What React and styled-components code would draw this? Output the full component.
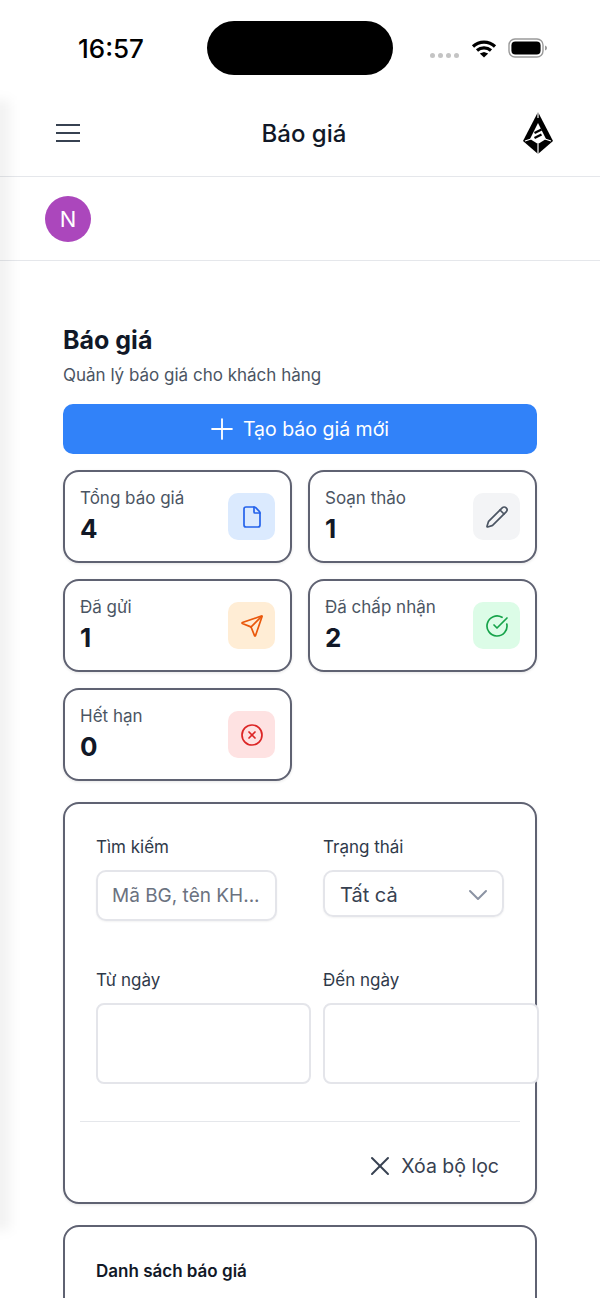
import React from 'react';
import styled, { createGlobalStyle } from 'styled-components';
import { Plus, File, Pencil, Send, CircleCheckBig, CircleX, ChevronDown, X } from 'lucide-react';

const GlobalStyle = createGlobalStyle`
  html, body {
    margin: 0;
    padding: 0;
    background: #fff;
    height: 100%;
    overflow: hidden;
  }
  * {
    box-sizing: border-box;
  }
  body {
    font-family: Inter, "Noto Sans", "Liberation Sans", sans-serif;
    color: #111827;
  }
`;

const stats = [
  { label: 'Tổng báo giá', value: 4, Icon: File, bg: '#dbeafe', fg: '#2563eb' },
  { label: 'Soạn thảo', value: 1, Icon: Pencil, bg: '#f3f4f6', fg: '#4b5563' },
  { label: 'Đã gửi', value: 1, Icon: Send, bg: '#ffedd5', fg: '#ea580c' },
  { label: 'Đã chấp nhận', value: 2, Icon: CircleCheckBig, bg: '#dcfce7', fg: '#16a34a' },
  { label: 'Hết hạn', value: 0, Icon: CircleX, bg: '#fee2e2', fg: '#dc2626' },
];

const Hamburger = () => (
  <svg width="24" height="20" viewBox="0 0 24 20">
    <path d="M0 2h24M0 10h24M0 18h24" stroke="#374151" strokeWidth="2" fill="none" />
  </svg>
);

const Logo = () => (
  <svg width="30" height="42" viewBox="0 0 30 42">
    <polygon points="15,0 30,29 15,42 0,29" fill="#000" />
    <polygon points="15,11 23,27 15,32 7,27" fill="#fff" />
    <path d="M11.500 21l7-3.500M11.500 26l7-3.500" stroke="#000" strokeWidth="2.300" fill="none" />
    <path d="M2 29l6-2M28 29l-6-2M15 32v10M15 0v6" stroke="#fff" strokeWidth="1.200" fill="none" />
  </svg>
);

const Wifi = () => (
  <svg width="26" height="19" viewBox="0 0 26 19">
    <path d="M2 7.500a16 16 0 0 1 22 0M6 11.500a10.500 10.500 0 0 1 14 0" stroke="#000" strokeWidth="3.200" fill="none" />
    <polygon points="13,18.500 8.800,14.400 13,13 17.200,14.400" fill="#000" />
  </svg>
);

const Battery = () => (
  <svg width="40" height="20" viewBox="0 0 40 20">
    <rect x="1" y="1" width="34" height="18" rx="6" fill="none" stroke="#9a9a9a" strokeWidth="1.400" />
    <rect x="3.400" y="3.400" width="29.200" height="13.200" rx="4" fill="#000" />
    <path d="M37 7.500c1.400.4 2 1.300 2 2.500s-.6 2.100-2 2.500z" fill="#9a9a9a" />
  </svg>
);

const App = () => (
  <Page>
    <GlobalStyle />
    <DrawerShadow />
    <StatusBar>
      <Clock>16:57</Clock>
      <Island />
      <StatusIcons>
        <Dots>
          <i /><i /><i /><i />
        </Dots>
        <Wifi />
        <Battery />
      </StatusIcons>
    </StatusBar>

    <NavBar>
      <Hamburger />
      <NavTitle>Báo giá</NavTitle>
      <Logo />
    </NavBar>

    <UserRow>
      <Avatar>N</Avatar>
    </UserRow>

    <Content>
      <Title>Báo giá</Title>
      <Subtitle>Quản lý báo giá cho khách hàng</Subtitle>
      <PrimaryButton>
        <Plus size={34} strokeWidth={1.300} />
        Tạo báo giá mới
      </PrimaryButton>

      <StatGrid>
        {stats.map(({ label, value, Icon, bg, fg }) => (
          <StatCard key={label}>
            <StatText>
              <StatLabel>{label}</StatLabel>
              <StatValue>{value}</StatValue>
            </StatText>
            <IconTile $bg={bg} $fg={fg}>
              <Icon size={24} strokeWidth={1.700} />
            </IconTile>
          </StatCard>
        ))}
      </StatGrid>

      <FilterPanel>
        <FilterGrid>
          <Field>
            <FieldLabel>Tìm kiếm</FieldLabel>
            <SearchInput placeholder="Mã BG, tên KH..." readOnly />
          </Field>
          <Field>
            <FieldLabel>Trạng thái</FieldLabel>
            <SelectBox>
              Tất cả
              <ChevronDown size={32} strokeWidth={1.500} color="#8b93a3" />
            </SelectBox>
          </Field>
          <Field>
            <FieldLabel>Từ ngày</FieldLabel>
            <DateBox />
          </Field>
          <Field>
            <FieldLabel>Đến ngày</FieldLabel>
            <DateBox />
          </Field>
        </FilterGrid>
        <Divider />
        <ClearRow>
          <X size={32} strokeWidth={1.500} />
          Xóa bộ lọc
        </ClearRow>
      </FilterPanel>

      <ListPanel>
        <ListTitle>Danh sách báo giá</ListTitle>
      </ListPanel>
    </Content>
  </Page>
);

export default App;

const Page = styled.div`
  position: relative;
  width: 600px;
  height: 1298px;
  overflow: hidden;
  background: #fff;
`;

const DrawerShadow = styled.div`
  position: absolute;
  left: -10px;
  top: 100px;
  width: 20px;
  height: 1130px;
  background: rgba(0, 0, 0, 0.05);
  filter: blur(6px);
  pointer-events: none;
`;

const StatusBar = styled.div`
  display: flex;
  align-items: flex-start;
  height: 95px;
  padding: 21px 0 0 78px;
`;

const Clock = styled.div`
  width: 129px;
  margin-top: 12px;
  font-size: 26px;
  line-height: 32px;
  font-weight: 500;
  color: #000;
`;

const Island = styled.div`
  width: 186px;
  height: 54px;
  border-radius: 27px;
  background: #000;
`;

const StatusIcons = styled.div`
  display: flex;
  align-items: center;
  gap: 11px;
  margin: 17px 0 0 37px;
`;

const Dots = styled.div`
  display: flex;
  gap: 3px;
  width: 30px;
  margin-top: 14px;

  i {
    width: 5px;
    height: 5px;
    border-radius: 50%;
    background: #c4c4c4;
  }
`;

const NavBar = styled.header`
  display: flex;
  align-items: center;
  justify-content: space-between;
  height: 82px;
  padding: 0 47px 5px 56px;
  border-bottom: 1px solid #e5e7eb;
`;

const NavTitle = styled.div`
  margin-left: 5px;
  font-size: 24px;
  font-weight: 500;
  color: #111827;
`;

const UserRow = styled.div`
  display: flex;
  align-items: center;
  height: 84px;
  padding: 1px 0 0 45px;
  border-bottom: 1px solid #e5e7eb;
`;

const Avatar = styled.div`
  display: flex;
  align-items: center;
  justify-content: center;
  width: 46px;
  height: 46px;
  border-radius: 50%;
  background: #ab47bc;
  color: #fff;
  font-size: 22px;
`;

const Content = styled.main`
  padding: 64px 63px 0;
`;

const Title = styled.h1`
  margin: 0;
  font-size: 25px;
  line-height: 30px;
  font-weight: 700;
  color: #111827;
`;

const Subtitle = styled.p`
  margin: 7px 0 0;
  font-size: 17px;
  line-height: 26px;
  color: #4b5563;
`;

const PrimaryButton = styled.button`
  display: flex;
  align-items: center;
  justify-content: center;
  gap: 4px;
  width: 100%;
  height: 50px;
  margin-top: 16px;
  padding: 0 6px 0 0;
  border: none;
  border-radius: 10px;
  background: #3182f9;
  color: #fff;
  font-family: inherit;
  font-size: 19.500px;
`;

const StatGrid = styled.div`
  display: grid;
  grid-template-columns: 1fr 1fr;
  gap: 16px;
  margin-top: 16px;
`;

const StatCard = styled.div`
  display: flex;
  align-items: center;
  justify-content: space-between;
  height: 93px;
  padding: 0 15px;
  border: 2px solid #5f6272;
  border-radius: 16px;
  background: #fff;
  box-shadow: 0 1px 3px rgba(0, 0, 0, 0.1);
`;

const StatText = styled.div`
  padding-bottom: 3px;
`;

const StatLabel = styled.div`
  font-size: 17px;
  line-height: 24px;
  color: #4b5563;
`;

const StatValue = styled.div`
  margin-top: 3px;
  font-size: 26px;
  line-height: 32px;
  font-weight: 700;
  color: #111827;
`;

const IconTile = styled.div`
  display: flex;
  align-items: center;
  justify-content: center;
  width: 47px;
  height: 47px;
  border-radius: 10px;
  background: ${(p) => p.$bg};
  color: ${(p) => p.$fg};
`;

const FilterPanel = styled.section`
  height: 402px;
  margin-top: 21px;
  padding: 31px 15px 0;
  border: 2px solid #5f6272;
  border-radius: 16px;
  background: #fff;
  box-shadow: 0 1px 3px rgba(0, 0, 0, 0.1);
`;

const FilterGrid = styled.div`
  display: grid;
  grid-template-columns: 215px 216px;
  grid-template-rows: 133px 153px;
  column-gap: 12px;
  padding-left: 16px;
`;

const Field = styled.div`
  display: flex;
  flex-direction: column;
  align-items: flex-start;
`;

const FieldLabel = styled.label`
  margin-bottom: 11px;
  font-size: 17px;
  line-height: 24px;
  font-weight: 400;
  color: #2f3a4a;
`;

const SearchInput = styled.input`
  width: 181px;
  height: 51px;
  padding: 0 14px;
  border: 2px solid #e4e5ea;
  border-radius: 10px;
  outline: none;
  font-family: inherit;
  font-size: 19px;
  box-shadow: 0 1px 2px rgba(0, 0, 0, 0.05);

  &::placeholder {
    color: #6b7280;
    opacity: 1;
  }
`;

const SelectBox = styled.div`
  display: flex;
  align-items: center;
  justify-content: space-between;
  width: 181px;
  height: 47px;
  padding: 2px 8px 0 15px;
  border: 2px solid #e4e5ea;
  border-radius: 10px;
  font-size: 20px;
  color: #374151;
  box-shadow: 0 1px 2px rgba(0, 0, 0, 0.05);
`;

const DateBox = styled.div`
  width: 100%;
  height: 81px;
  border: 2px solid #e4e5ea;
  border-radius: 8px;
  background: #fff;
`;

const Divider = styled.hr`
  margin: 0;
  border: none;
  border-top: 1px solid #e5e7eb;
`;

const ClearRow = styled.button`
  display: flex;
  align-items: center;
  justify-content: flex-end;
  gap: 5px;
  width: 100%;
  height: 88px;
  padding: 0 21px 0 0;
  border: none;
  background: none;
  color: #374151;
  font-family: inherit;
  font-size: 19.500px;
`;

const ListPanel = styled.section`
  height: 300px;
  margin-top: 21px;
  padding: 32px 31px 0;
  border: 2px solid #5f6272;
  border-radius: 16px;
  background: #fff;
`;

const ListTitle = styled.h2`
  margin: 0;
  font-size: 17px;
  line-height: 24px;
  font-weight: 600;
  color: #111827;
`;
